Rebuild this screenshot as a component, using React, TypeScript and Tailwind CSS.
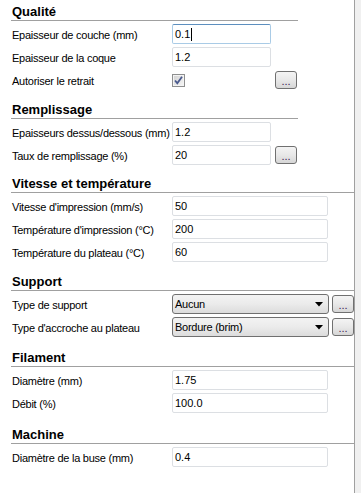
type Row = {
  label: string;
  kind: "input" | "check" | "select";
  value?: string;
  focus?: boolean;
  more?: boolean;
};

type Section = {
  title: string;
  narrow: boolean;
  mt: string;
  rows: Row[];
};

const sections: Section[] = [
  {
    title: "Qualité",
    narrow: true,
    mt: "mt-[4px]",
    rows: [
      { label: "Epaisseur de couche (mm)", kind: "input", value: "0.1", focus: true },
      { label: "Epaisseur de la coque", kind: "input", value: "1.2" },
      { label: "Autoriser le retrait", kind: "check", more: true },
    ],
  },
  {
    title: "Remplissage",
    narrow: true,
    mt: "mt-[12px]",
    rows: [
      { label: "Epaisseurs dessus/dessous (mm)", kind: "input", value: "1.2" },
      { label: "Taux de remplissage (%)", kind: "input", value: "20", more: true },
    ],
  },
  {
    title: "Vitesse et température",
    narrow: false,
    mt: "mt-[11px]",
    rows: [
      { label: "Vitesse d'impression (mm/s)", kind: "input", value: "50" },
      { label: "Température d'impression (°C)", kind: "input", value: "200" },
      { label: "Température du plateau (°C)", kind: "input", value: "60" },
    ],
  },
  {
    title: "Support",
    narrow: false,
    mt: "mt-[12px]",
    rows: [
      { label: "Type de support", kind: "select", value: "Aucun", more: true },
      { label: "Type d'accroche au plateau", kind: "select", value: "Bordure (brim)", more: true },
    ],
  },
  {
    title: "Filament",
    narrow: false,
    mt: "mt-[13px]",
    rows: [
      { label: "Diamètre (mm)", kind: "input", value: "1.75" },
      { label: "Débit (%)", kind: "input", value: "100.0" },
    ],
  },
  {
    title: "Machine",
    narrow: false,
    mt: "mt-[14px]",
    rows: [{ label: "Diamètre de la buse (mm)", kind: "input", value: "0.4" }],
  },
];

function MoreButton({ ml }: { ml: string }) {
  return (
    <div
      className={`${ml} w-[22px] h-[18px] rounded-[3px] border border-[#707070] bg-gradient-to-b from-[#f4f4f4] via-[#e8e8e8] to-[#d6d6d6] flex items-center justify-center text-[11px] leading-none text-[#3a2050] pt-[2px]`}
    >
      ...
    </div>
  );
}

function CheckBox() {
  return (
    <svg width="13" height="13" viewBox="0 0 13 13">
      <defs>
        <linearGradient id="cbg" x1="0" y1="0" x2="1" y2="1">
          <stop offset="0" stopColor="#d4d4d4" />
          <stop offset="1" stopColor="#f4f4f4" />
        </linearGradient>
      </defs>
      <rect x="0.5" y="0.5" width="12" height="12" fill="#f4f4f4" stroke="#8e8f8f" />
      <rect x="2" y="2" width="9" height="9" fill="url(#cbg)" />
      <path d="M3 6.5 L5.3 9.2 L10 2.8" fill="none" stroke="#4a5a8e" strokeWidth="1.8" />
    </svg>
  );
}

function Field({ row, narrow }: { row: Row; narrow: boolean }) {
  if (row.kind === "check") {
    return (
      <div className="flex items-center w-[125px]">
        <div className="w-[99px] flex items-center">
          <CheckBox />
        </div>
        <MoreButton ml="ml-[4px]" />
      </div>
    );
  }
  if (row.kind === "select") {
    return (
      <div className="flex items-center">
        <div className="w-[157px] h-[20px] rounded-[3px] border border-[#707070] bg-gradient-to-b from-[#f3f3f3] via-[#ebebeb] to-[#dcdcdc] flex items-center pl-[2px] pr-[5px] text-[11px] tracking-[-0.25px] text-black">
          <span className="flex-1">{row.value}</span>
          <svg width="8" height="5" viewBox="0 0 8 5">
            <path d="M0 0 H8 L4 4.5 Z" fill="#000" />
          </svg>
        </div>
        <MoreButton ml="ml-[3px]" />
      </div>
    );
  }
  const border = row.focus
    ? "border-[#a9cbe6] border-t-[#5d8fbf]"
    : "border-[#dcdfe3]";
  return (
    <div className="flex items-center">
      <div
        className={`${narrow ? "w-[99px]" : "w-[156px]"} h-[20px] rounded-[2px] border ${border} bg-white flex items-center pl-[2px] text-[11px] text-black`}
      >
        {row.value}
        {row.focus && <span className="inline-block w-px h-[13px] bg-black ml-[1px]" />}
      </div>
      {row.more && <MoreButton ml="ml-[4px]" />}
    </div>
  );
}

export default function App() {
  return (
    <div
      className="flex w-[361px] h-[493px] bg-[#f0f0f0] overflow-hidden"
      style={{ fontFamily: '"Liberation Sans", Arial, sans-serif' }}
    >
      <div className="w-[355px] bg-white border-r border-[#a0a0a0] pl-[11px] flex flex-col">
        {sections.map((s) => (
          <div key={s.title} className={s.mt}>
            {/* section title with rule */}
            <div
              className={`${s.narrow ? "w-[287px]" : ""} h-[17px] border-b border-[#a0a0a0] pl-[1px] text-[13px] font-bold leading-[16px] text-black whitespace-nowrap`}
            >
              {s.title}
            </div>
            <div className="mt-[3px] flex flex-col gap-[3px]">
              {s.rows.map((r) => (
                <div key={r.label} className="flex items-center h-[20px]">
                  <div className="w-[161px] shrink-0 pl-[1px] text-[11px] tracking-[-0.25px] text-black pt-[2px] whitespace-nowrap">
                    {r.label}
                  </div>
                  <Field row={r} narrow={s.narrow} />
                </div>
              ))}
            </div>
          </div>
        ))}
      </div>
      <div className="flex-1" />
    </div>
  );
}
